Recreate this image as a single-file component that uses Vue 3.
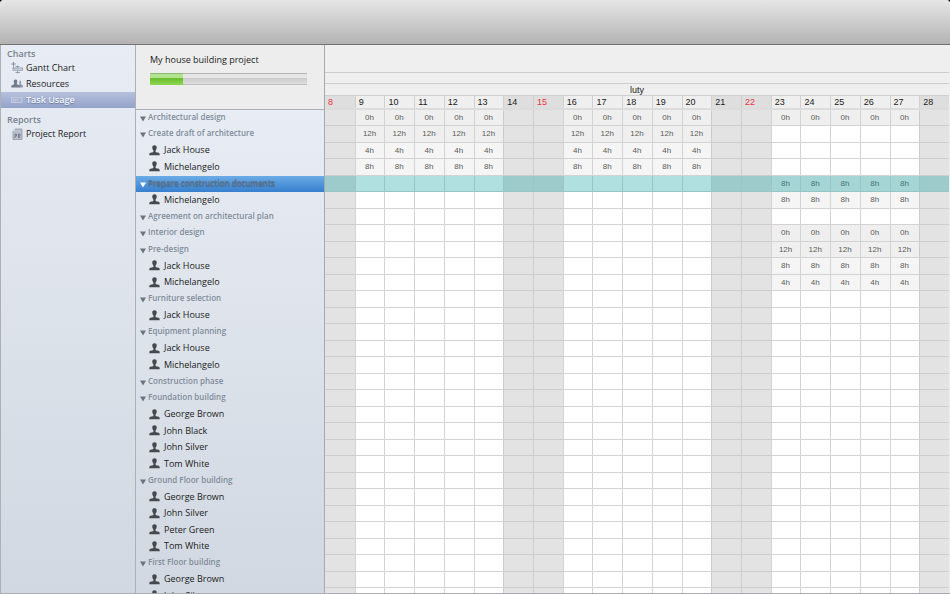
<script setup>
import { ref } from 'vue'

const current = ref('Task Usage')
const sections = [
  { title: 'Charts', items: ['Gantt Chart', 'Resources', 'Task Usage'] },
  { title: 'Reports', items: ['Project Report'] },
]

const days = Array.from({ length: 21 }, (_, i) => i + 8)
const sundays = [8, 15, 22]
const isOff = (d) => [8, 14, 15, 21, 22, 28].includes(d)

// early: hours per day for 9-20 February, late: hours per day for 23-27 February
const task = (name, early = '', late = '') => ({ name, early, late, group: true })
const person = (name, early = '', late = '') => ({ name, early, late, group: false })

const rows = [
  task('Architectural design', '0h', '0h'),
  task('Create draft of architecture', '12h'),
  person('Jack House', '4h'),
  person('Michelangelo', '8h'),
  task('Prepare construction documents', '', '8h'),
  person('Michelangelo', '', '8h'),
  task('Agreement on architectural plan'),
  task('Interior design', '', '0h'),
  task('Pre-design', '', '12h'),
  person('Jack House', '', '8h'),
  person('Michelangelo', '', '4h'),
  task('Furniture selection'),
  person('Jack House'),
  task('Equipment planning'),
  person('Jack House'),
  person('Michelangelo'),
  task('Construction phase'),
  task('Foundation building'),
  person('George Brown'),
  person('John Black'),
  person('John Silver'),
  person('Tom White'),
  task('Ground Floor building'),
  person('George Brown'),
  person('John Silver'),
  person('Peter Green'),
  person('Tom White'),
  task('First Floor building'),
  person('George Brown'),
  person('John Silver'),
]
const selected = ref(4)

function hours(row, d) {
  if (isOff(d)) return ''
  return d <= 20 ? row.early : row.late
}
</script>

<template>
  <div class="window">
    <header class="toolbar"></header>
    <div class="body">
      <nav class="sidebar">
        <section v-for="s in sections" :key="s.title" class="section">
          <h2>{{ s.title }}</h2>
          <a
            v-for="item in s.items"
            :key="item"
            href="#"
            class="link"
            :class="{ active: item === current }"
            @click.prevent="current = item"
          >
            <svg v-if="item === 'Gantt Chart'" class="icon" viewBox="0 0 12 12">
              <path d="M2.500 0v4.500M.3 2h4.500" stroke="#8b94a2" stroke-width="1.1" />
              <path d="M2.500 4.500V7M6.500 3.500v8M4.500 4.500h4" stroke="#9aa3b0" fill="none" />
              <rect x="2" y="6" width="9.500" height="2.200" fill="#d3d9e2" stroke="#8b94a2" stroke-width=".8" />
              <path d="M4.500 10.500h4.500" stroke="#9aa3b0" />
            </svg>
            <svg v-else-if="item === 'Resources'" class="icon" viewBox="0 0 12 12">
              <path d="M8.500 2.500c1.300 0 1.700 1 1.400 2.200-.2.900-.3 1.500.3 1.800l1.600.7V9.500H8z" fill="#8d97a7" />
              <path d="M4.500 1.500c1.500 0 2 1.200 1.700 2.600-.2 1-.5 1.500-.3 2.200l2.300 1c.6.400.6 1.200.6 2.200H.3c0-1 0-1.800.6-2.200l2.200-1c.2-.7-.1-1.200-.3-2.200C2.500 2.700 3 1.500 4.500 1.500z" fill="#717c8d" />
            </svg>
            <svg v-else-if="item === 'Task Usage'" class="icon" viewBox="0 0 12 12">
              <rect x=".5" y="3.500" width="10.500" height="5" fill="#a9b5d2" stroke="#c5cfe5" stroke-width=".8" />
              <path d="M1.500 5.500h6M1.500 7h4" stroke="#c5cfe5" stroke-width=".7" />
            </svg>
            <svg v-else class="icon" viewBox="0 0 12 12">
              <path d="M4 1h7v10.500H2V3z" fill="#b9c1cd" stroke="#8d97a6" stroke-width=".8" />
              <path d="M2 3h2V1z" fill="#e5e9f0" />
              <path d="M4 10V6h1.500v2H4M7.500 10V6H9v2H7.500L9.300 10" fill="none" stroke="#6d7889" stroke-width=".9" />
            </svg>
            <span>{{ item }}</span>
          </a>
        </section>
      </nav>

      <section class="outline">
        <div class="project">
          <label for="done">My house building project</label>
          <progress id="done" max="100" value="21"></progress>
        </div>
        <ul class="tree">
          <li
            v-for="(row, i) in rows"
            :key="i"
            class="row"
            :class="{ group: row.group, selected: i === selected }"
            @click="selected = i"
          >
            <button v-if="row.group" type="button" class="toggle" :aria-label="row.name">
              <svg viewBox="0 0 6 6"><path d="M0 0.500h6L3 5.500z" fill="currentColor" /></svg>
            </button>
            <svg v-else class="person" viewBox="0 0 11 11">
              <path d="M5.500.3c1.700 0 2.400 1.100 2.200 2.700-.1 1.100-.7 1.900-1.100 2.500-.2.900 0 1.500.4 1.700l2.600.6c.9.300 1.100 1 1.100 2.500H.3c0-1.500.2-2.200 1.100-2.500L4 7.200c.4-.2.600-.8.400-1.700C4 4.900 3.400 4.100 3.300 3 3.100 1.400 3.800.3 5.500.3z" fill="#45484d" />
            </svg>
            <span>{{ row.name }}</span>
          </li>
        </ul>
      </section>

      <section class="chart">
        <div class="band band-top"></div>
        <div class="band"></div>
        <table>
          <caption>luty</caption>
          <thead>
            <tr>
              <th v-for="d in days" :key="d" scope="col" :class="{ off: isOff(d), sunday: sundays.includes(d) }">{{ d }}</th>
            </tr>
          </thead>
          <tbody>
            <tr v-for="(row, i) in rows" :key="i" class="row" :class="{ group: row.group, selected: i === selected }">
              <td v-for="d in days" :key="d" :class="{ off: isOff(d), busy: hours(row, d) }">{{ hours(row, d) }}</td>
            </tr>
          </tbody>
        </table>
      </section>
    </div>
  </div>
</template>

<style>
body {
  margin: 0;
  background: #000;
}
</style>

<style scoped>
* {
  box-sizing: border-box;
}
.window {
  display: flex;
  flex-direction: column;
  height: 100vh;
  overflow: hidden;
  border-radius: 4px 4px 1px 1px;
  font: 9px/12px "Open Sans", "Noto Sans", sans-serif;
  color: #1b1b1b;
  background: #ededed;
}
.toolbar {
  flex: none;
  height: 45px;
  background: linear-gradient(#e6e6e6, #b3b3b3);
  border-bottom: 1px solid #727272;
}
.body {
  display: grid;
  grid-template-columns: 136px 189px 1fr;
  flex: 1;
  min-height: 0;
  border-bottom: 1px solid #a9adb3;
}
.sidebar {
  padding-top: 2px;
  border: solid #adb0b7;
  border-width: 0 1px;
  background: linear-gradient(#e8ecf4, #d1d8e1);
}
.section + .section {
  margin-top: 5px;
}
h2 {
  margin: 0;
  padding-left: 6px;
  font-size: 9px;
  line-height: 14px;
  height: 13px;
  font-weight: 600;
  color: #77838f;
}
.link {
  display: flex;
  align-items: center;
  gap: 3px;
  height: 16px;
  padding-left: 10px;
  color: inherit;
  font-weight: 500;
  text-decoration: none;
}
.link.active {
  color: #f4f6fb;
  font-weight: 600;
  text-shadow: 0 1px 1px #6c7aa0;
  background: linear-gradient(#b5c0dc, #94a3ca);
}
.icon {
  width: 12px;
  height: 12px;
}
.outline {
  display: flex;
  flex-direction: column;
  min-height: 0;
  border-right: 1px solid #a5a8ae;
}
.project {
  display: flex;
  flex-direction: column;
  flex: none;
  gap: 7px;
  height: 65px;
  padding: 9px 17px 0 14px;
  border-bottom: 1px solid #acaeb2;
  font-weight: 500;
}
progress {
  appearance: none;
  display: block;
  width: 100%;
  height: 12px;
  border: 0;
}
progress::-webkit-progress-bar {
  background: linear-gradient(#b4b4b4 0 1px, #e6e6e6 1px 5px, #cbcbcb 5px, #dedede 11px, #bebebe 11px);
}
progress::-webkit-progress-value {
  background: linear-gradient(#8fbc74 0 1px, #b2e38f 1px 5px, #6abb2d 5px, #8cd84f);
}
.tree {
  flex: 1;
  min-height: 0;
  margin: 0;
  padding: 0;
  overflow: hidden;
  list-style: none;
  background: linear-gradient(#e8ecf4, #d1d8e1);
}
.row {
  height: 16px;
}
.row:nth-child(even) {
  height: 17px;
}
.tree .row {
  display: flex;
  align-items: center;
  gap: 4px;
  padding: 0 0 2px 13px;
  font-weight: 500;
}
.tree .group {
  gap: 2px;
  padding: 0 0 3px 4px;
  font-size: 8px;
  font-weight: 600;
  color: #7f8c9a;
}
.tree .selected {
  color: #5d7590;
  text-shadow: 0 1px 1px #46627f;
  background: linear-gradient(#6bace6, #377fce);
}
.toggle {
  display: flex;
  padding: 4px 0 0;
  border: 0;
  background: none;
  color: #6b7480;
}
.selected .toggle {
  color: #fff;
}
.toggle svg {
  width: 6px;
  height: 6px;
}
.person {
  width: 11px;
  height: 11px;
}
.chart {
  min-width: 0;
  overflow: hidden;
  padding-right: 1px;
  font-family: "Liberation Sans", Arial, sans-serif;
  background: #efefef;
}
.band {
  height: 11px;
  border-bottom: 1px solid #cdcdcd;
}
.band-top {
  height: 28px;
}
table,
thead,
tbody {
  display: block;
}
caption {
  display: block;
  height: 12px;
  border-bottom: 1px solid #d0d0d0;
  text-align: center;
}
tr {
  display: grid;
  grid-template-columns: repeat(21, minmax(0, 1fr));
}
thead {
  border-bottom: 2px solid #dcdcdc;
}
th {
  height: 12px;
  padding: 0 0 0 3px;
  border-left: 1px solid #d0d0d0;
  font-weight: 400;
  text-align: left;
}
th.off {
  background: #dedede;
}
th.sunday {
  color: #ee3338;
}
tbody {
  background: #fff;
}
td {
  padding: 0 1px 0 0;
  border: solid #d4d2d3;
  border-width: 0 0 1px 1px;
  font-size: 8px;
  line-height: 15px;
  text-align: center;
  color: #5c5c5c;
}
th:first-child,
td:first-child {
  border-left: 0;
}
td.busy {
  background: #f5f5f5;
}
.group td.busy {
  background: #efefef;
}
td.off {
  background: #e3e3e3;
  border-color: #cecccd;
}
.selected td {
  background: #b1e0e0;
  border-color: #98c6c6;
  color: #3f7777;
}
.selected td.busy {
  background: #a6d5d5;
}
.selected td.off {
  background: #9dcbcb;
}
</style>
